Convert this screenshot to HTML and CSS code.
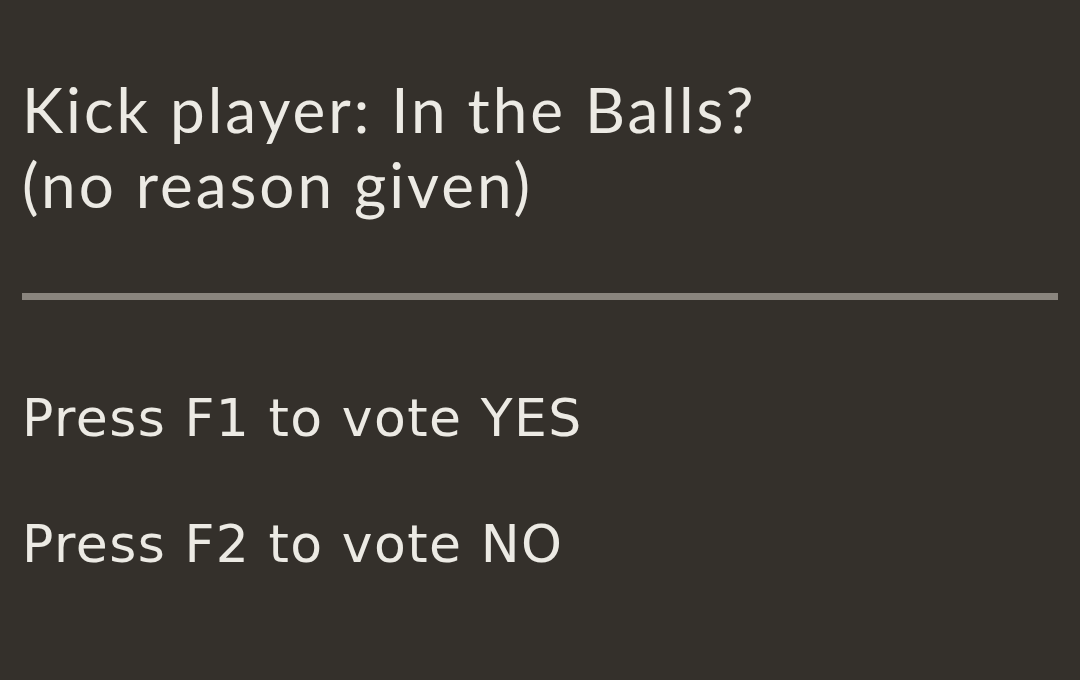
FILE: index.html
```html
<!DOCTYPE html>
<html lang="en">
  <head>
    <meta charset="UTF-8" />
    <title>Vote</title>
    <link rel="stylesheet" href="styles.css">
  </head>
  <body>
    <div class="vote-panel">
      <h2 class="vote-issue">Kick player: In the Balls?<br />(no reason given)</h2>
      <hr class="divider" />
      <p class="vote-option">Press F1 to vote YES</p>
      <p class="vote-option">Press F2 to vote NO</p>
    </div>
  </body>
</html>
```

FILE: styles.css
```css
html,
body {
  margin: 0;
  height: 100%;
}
body {
  background-color: #34302b;
  color: #eceae4;
}
.vote-panel {
  padding: 72px 22px 0 22px;
}
.vote-issue {
  font-family: "Lato", sans-serif;
  font-weight: 400;
  font-size: 62px;
  line-height: 75px;
  margin: 0;
  letter-spacing: 3px;
}
.divider {
  border: none;
  height: 7px;
  background: #8a857e;
  margin: 71px 0 0 0;
}
.vote-option {
  font-family: "DejaVu Sans", sans-serif;
  font-size: 52px;
  line-height: 60px;
  letter-spacing: 1.5px;
  margin: 88px 0 0 0;
}
.vote-option + .vote-option {
  margin-top: 66px;
}
```
